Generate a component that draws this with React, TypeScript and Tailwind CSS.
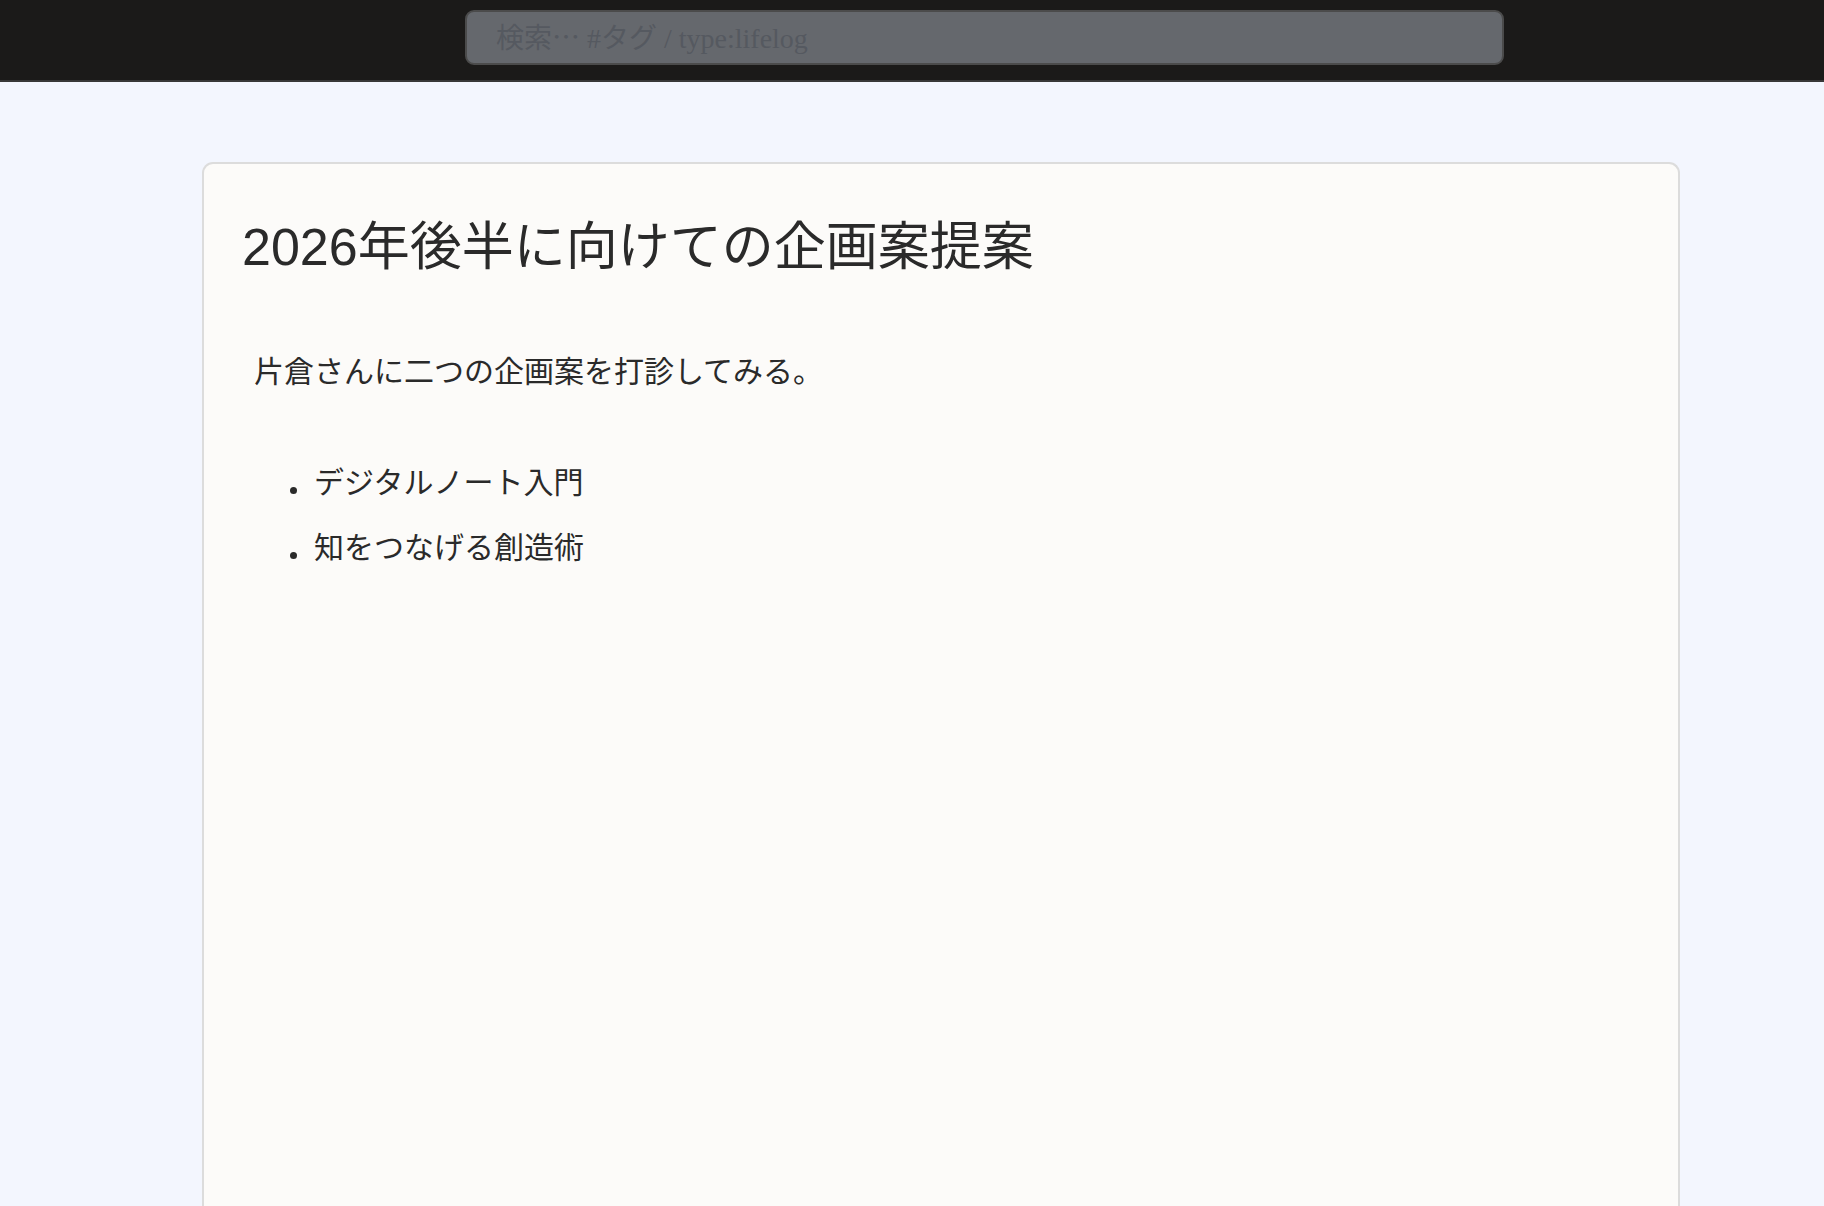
export default function App() {
  return (
    <div className="min-h-screen bg-[#f3f6fe] font-['Liberation_Sans','Noto_Sans_CJK_JP',sans-serif] text-[#2a2a2a]">
      <header className="flex h-[82px] items-center border-b-2 border-[#383838] bg-[#1b1a19] pl-[465px]">
        <input
          type="text"
          placeholder="検索⋯ #タグ / type:lifelog"
          className="mb-[6px] h-[55px] w-[1039px] rounded-[9px] border-2 border-[#4b4b4b] bg-[#65686d] px-[29px] pt-[3px] font-['Liberation_Serif','Noto_Sans_CJK_JP',serif] text-[28px] text-white outline-none placeholder:text-[#555960]"
        />
      </header>

      <main className="pt-[80px] pl-[202px] pr-[144px]">
        <article className="min-h-[1100px] rounded-t-[11px] border-2 border-b-0 border-[#dcdcdc] bg-[#fcfbf9] px-[38px] pt-[53px]">
          <h1 className="text-[52px] leading-[60px] font-normal">
            2026年後半に向けての企画案提案
          </h1>

          <p className="mt-[71px] pl-[12px] text-[30px] leading-[48px]">
            片倉さんに二つの企画案を打診してみる。
          </p>

          <ul className="mt-[63px] space-y-[17px] pl-[48px] text-[30px] leading-[48px]">
            {["デジタルノート入門", "知をつなげる創造術"].map((item) => (
              <li key={item} className="flex items-baseline gap-[17px]">
                <span className="inline-block h-[7px] w-[7px] translate-y-[1px] rounded-full bg-[#2a2a2a]" />
                <span>{item}</span>
              </li>
            ))}
          </ul>
        </article>
      </main>
    </div>
  );
}
